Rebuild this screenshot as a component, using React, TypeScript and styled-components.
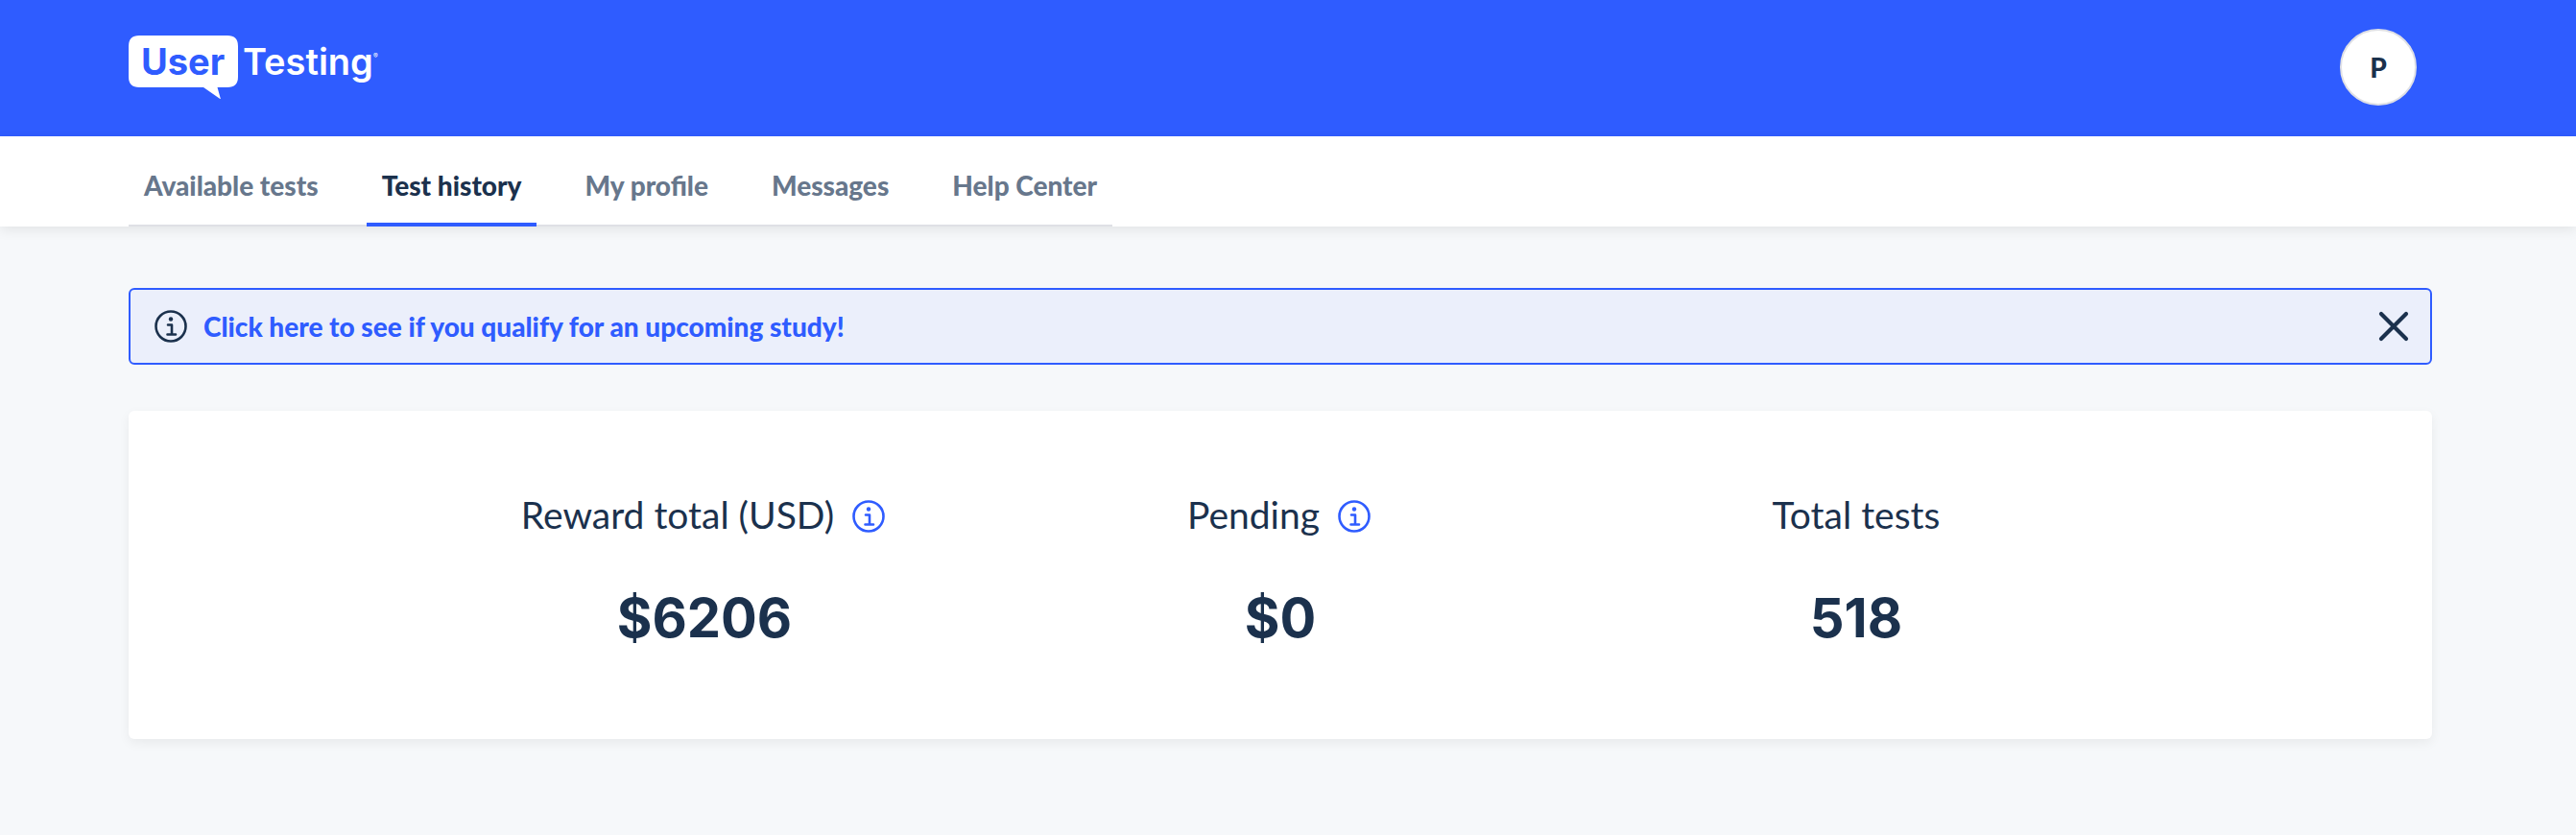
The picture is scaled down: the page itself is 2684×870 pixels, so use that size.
import React from "react";
import styled, { createGlobalStyle } from "styled-components";

const color = {
  brand: "#2f5cff",
  ink: "#1b314d",
  muted: "#67778c",
  page: "#f6f8fa",
  notice: "#ebeffb",
  line: "#dfe0e5",
};

const GlobalStyle = createGlobalStyle`
  *, *::before, *::after { box-sizing: border-box; }
  body {
    margin: 0;
    background: ${color.page};
    color: ${color.ink};
    font-family: Lato, "Open Sans", sans-serif;
    font-size: 28px;
    line-height: 32px;
  }
`;

const Inner = styled.div`
  padding: 0 150px 0 134px;
`;

const Header = styled.header`
  background: ${color.brand};
`;

const HeaderRow = styled(Inner)`
  display: flex;
  align-items: center;
  justify-content: space-between;
  padding-top: 30px;
  padding-bottom: 32px;
`;

const LogoLink = styled.a`
  display: flex;
`;

const LogoText = styled.text<{ $bold?: boolean }>`
  font: ${(p) => (p.$bold ? 700 : 600)} 38px Inter, sans-serif;
`;

const LogoMark = styled.text`
  font: 400 7px Inter, sans-serif;
`;

const Avatar = styled.button`
  width: 80px;
  height: 80px;
  margin-right: 16px;
  padding: 0;
  border: 2px solid ${color.line};
  border-radius: 50%;
  background: #fff;
  color: ${color.ink};
  font: 900 28px/32px Lato, sans-serif;
  cursor: pointer;
`;

const NavBar = styled.nav`
  background: #fff;
  box-shadow: 0 4px 12px rgba(0, 0, 0, 0.08);
`;

const TabList = styled.ul`
  display: inline-flex;
  gap: 34px;
  margin: 0;
  padding: 0;
  list-style: none;
  vertical-align: top;
  box-shadow: inset 0 -2px ${color.line};
`;

const Tab = styled.a<{ $active?: boolean }>`
  display: block;
  padding: 35px 16px 23px;
  border-bottom: 4px solid ${(p) => (p.$active ? color.brand : "transparent")};
  color: ${(p) => (p.$active ? color.ink : color.muted)};
  font-weight: 900;
  text-decoration: none;
  white-space: nowrap;
`;

const Content = styled(Inner)`
  display: flex;
  flex-direction: column;
  gap: 48px;
  padding-top: 64px;
  padding-bottom: 64px;
`;

const Notice = styled.div`
  display: flex;
  align-items: center;
  gap: 14px;
  padding: 18px 18px 18px 22px;
  border: 2px solid ${color.brand};
  border-radius: 6px;
  background: ${color.notice};
`;

const NoticeLink = styled.a`
  flex: 1;
  color: ${color.brand};
  font-weight: 900;
  text-decoration: none;
`;

const IconButton = styled.button`
  display: flex;
  padding: 0;
  border: 0;
  background: none;
  color: inherit;
  cursor: pointer;
`;

const HintButton = styled(IconButton)`
  margin-top: 4px;
  color: ${color.brand};
`;

const Summary = styled.dl`
  display: grid;
  grid-template-columns: repeat(3, 1fr);
  margin: 0;
  padding: 84px 12.5% 94px;
  border-radius: 6px;
  background: #fff;
  box-shadow: 0 4px 12px rgba(0, 0, 0, 0.06);
`;

const Stat = styled.div`
  display: flex;
  flex-direction: column;
  align-items: center;
  gap: 52px;
`;

const StatLabel = styled.dt`
  display: flex;
  align-items: center;
  gap: 16px;
  font-size: 39px;
  line-height: 48px;
  white-space: nowrap;
`;

const StatValue = styled.dd`
  margin: 0;
  font: 700 56px/64px Inter, sans-serif;
`;

function Logo() {
  return (
    <svg width="260" height="66" viewBox="0 0 260 66" role="img" aria-label="UserTesting">
      <path
        d="M11 0H103Q114 0 114 11V43Q114 54 103 54H92.500L96 66.500L78 54H11Q0 54 0 43V11Q0 0 11 0Z"
        fill="#fff"
      />
      <LogoText $bold x="13" y="41" fill={color.brand}>User</LogoText>
      <LogoText x="119" y="41" fill="#fff">Testing</LogoText>
      <LogoMark x="255" y="24" fill="#fff">®</LogoMark>
    </svg>
  );
}

function InfoIcon() {
  return (
    <svg width="40" height="40" viewBox="0 0 40 40" fill="none" stroke="currentColor" strokeLinecap="round" aria-hidden="true">
      <circle cx="20" cy="20" r="15.500" strokeWidth="2.600" />
      <circle cx="20" cy="12.500" r="2.200" fill="currentColor" stroke="none" />
      <path d="M17 18.500H21V28.500M16.500 28.500H25" strokeWidth="2.600" strokeLinejoin="round" />
    </svg>
  );
}

function CloseIcon() {
  return (
    <svg width="40" height="40" viewBox="0 0 40 40" stroke="currentColor" strokeWidth="4.200" strokeLinecap="round" aria-hidden="true">
      <path d="M7 7L33 33M33 7L7 33" />
    </svg>
  );
}

const tabs = ["Available tests", "Test history", "My profile", "Messages", "Help Center"];
const activeTab = "Test history";

const stats = [
  { label: "Reward total (USD)", value: "$6206", hint: true },
  { label: "Pending", value: "$0", hint: true },
  { label: "Total tests", value: "518", hint: false },
];

export default function App() {
  return (
    <>
      <GlobalStyle />
      <Header>
        <HeaderRow>
          <LogoLink href="#home"><Logo /></LogoLink>
          <Avatar type="button" aria-label="P, account menu">P</Avatar>
        </HeaderRow>
      </Header>
      <NavBar>
        <Inner>
          <TabList>
            {tabs.map((name) => (
              <li key={name}>
                <Tab href="#" $active={name === activeTab} aria-current={name === activeTab ? "page" : undefined}>
                  {name}
                </Tab>
              </li>
            ))}
          </TabList>
        </Inner>
      </NavBar>
      <Content as="main">
        <Notice>
          <InfoIcon />
          <NoticeLink href="#study">Click here to see if you qualify for an upcoming study!</NoticeLink>
          <IconButton type="button" aria-label="Dismiss"><CloseIcon /></IconButton>
        </Notice>
        <Summary>
          {stats.map((stat) => (
            <Stat key={stat.label}>
              <StatLabel>
                {stat.label}
                {stat.hint && (
                  <HintButton type="button" aria-label={`About ${stat.label}`}><InfoIcon /></HintButton>
                )}
              </StatLabel>
              <StatValue>{stat.value}</StatValue>
            </Stat>
          ))}
        </Summary>
      </Content>
    </>
  );
}
